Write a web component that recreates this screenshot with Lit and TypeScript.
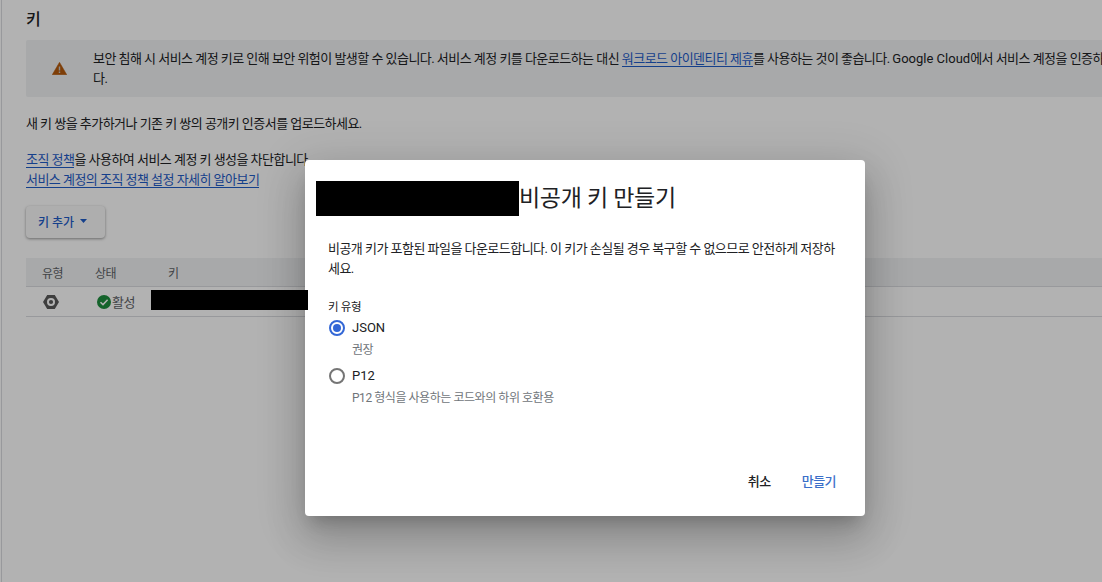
import { LitElement, html, css } from "lit";
import { customElement } from "lit/decorators.js";

@customElement("app-root")
export class AppRoot extends LitElement {
  static styles = css`
    :host {
      display: block;
      position: relative;
      width: 1102px;
      height: 582px;
      overflow: hidden;
      background: #fff;
      font-family: Roboto, "Noto Sans CJK KR", sans-serif;
      font-size: 13px;
      letter-spacing: -0.53px;
      color: #202124;
    }
    .latin { letter-spacing: 0; }
    .page {
      width: 1400px;
      height: 582px;
      box-sizing: border-box;
      margin-left: 1px;
      padding: 9px 0 0 24px;
      border-left: 1px solid #dadce0;
    }
    h2 {
      margin: 0;
      font-size: 16px;
      line-height: 22px;
      font-weight: 500;
      height: 31px;
    }
    .callout {
      display: flex;
      align-items: center;
      height: 57px;
      background: #f1f3f4;
      border-radius: 2px;
      width: 1300px;
    }
    .callout .ic {
      width: 67px;
      display: flex;
      justify-content: center;
      flex: none;
    }
    .callout p {
      margin: 0;
      line-height: 20px;
      white-space: nowrap;
    }
    a {
      color: #1f5cc8;
      text-decoration: none;
      border-bottom: 1px solid #1f5cc8;
    }
    .intro {
      margin: 17px 0 0;
      line-height: 20px;
    }
    .policy {
      margin: 16px 0 0;
      line-height: 20px;
    }
    .add {
      display: inline-flex;
      align-items: center;
      gap: 6px;
      box-sizing: border-box;
      width: 79px;
      height: 32px;
      padding: 0 0 2px 12px;
      margin-top: 16px;
      border-radius: 4px;
      font-size: 12px;
      font-weight: 500;
      letter-spacing: 0;
      color: #1f5cc8;
      background: #fafafa;
      box-shadow: 0 1px 3px rgba(0, 0, 0, 0.4);
    }
    .table { margin-top: 20px; width: 1300px; }
    .tr {
      display: grid;
      grid-template-columns: 52px 73px 1fr;
      align-items: center;
    }
    .th {
      height: 28px;
      background: #f1f3f4;
      border-bottom: 1px solid #dadce0;
      color: #5f6368;
      font-size: 12px;
    }
    .th span:first-child { padding-left: 16px; }
    .th span:nth-child(2) { padding-left: 17px; }
    .th span:nth-child(3) { padding-left: 17px; }
    .td {
      height: 29px;
      border-bottom: 1px solid #dadce0;
    }
    .td > .c1 { padding-left: 17px; display: flex; }
    .td > .c2 {
      padding-left: 19px;
      display: flex;
      align-items: center;
      gap: 1px;
      color: #5f6368;
      white-space: nowrap;
    }
    .td > .c3 { align-self: start; padding-top: 3px; }
    .redact-key {
      display: block;
      width: 157px;
      height: 20px;
      background: #000;
      position: relative;
      z-index: 3;
    }
    .scrim {
      position: absolute;
      inset: 0;
      background: rgba(0, 0, 0, 0.3);
      z-index: 1;
    }
    .dialog {
      position: absolute;
      left: 305px;
      top: 160px;
      width: 560px;
      height: 356px;
      box-sizing: border-box;
      padding: 21px 11px 0 11px;
      background: #fff;
      border-radius: 4px;
      box-shadow: 0 11px 15px -7px rgba(0, 0, 0, 0.2),
        0 24px 38px 3px rgba(0, 0, 0, 0.14),
        0 9px 46px 8px rgba(0, 0, 0, 0.12);
      z-index: 2;
      display: flex;
      flex-direction: column;
    }
    .title {
      display: flex;
      align-items: center;
      font-size: 23px;
      letter-spacing: -0.3px;
      line-height: 35px;
      color: #202124;
    }
    .redact-title {
      width: 203px;
      height: 35px;
      background: #000;
      flex: none;
    }
    .inner {
      padding: 0 13px 0 12px;
      flex: 1;
      display: flex;
      flex-direction: column;
    }
    .desc {
      margin: 23px 0 0;
      line-height: 20px;
    }
    .label {
      margin-top: 20px;
      font-size: 11.5px;
      letter-spacing: -0.3px;
      line-height: 16px;
    }
    .opt {
      display: grid;
      grid-template-columns: 24px 1fr;
      align-items: center;
      margin-top: 3px;
    }
    .opt + .opt { margin-top: 8px; }
    .opt .name { line-height: 20px; letter-spacing: 0; }
    .opt .hint {
      grid-column: 2;
      margin-top: 4px;
      font-size: 12px;
      letter-spacing: -0.45px;
      line-height: 16px;
      color: #70757a;
    }
    .radio { display: block; }
    .actions {
      margin-top: auto;
      display: flex;
      justify-content: flex-end;
      gap: 31px;
      padding: 0 5px 25px 0;
      line-height: 18px;
      font-weight: 500;
    }
    .actions .primary { color: #3b6fc9; }
  `;

  render() {
    return html`
      <div class="page">
        <h2>키</h2>
        <div class="callout">
          <div class="ic">
            <svg width="15" height="13" viewBox="0 0 15 13">
              <path d="M7.5 0.3 14.8 12.8H0.2Z" fill="#b55a0c" stroke="#b55a0c" stroke-width=".5" stroke-linejoin="round"></path>
              <path d="M6.8 4.6h1.4v4H6.8zM6.8 9.6h1.4V11H6.8z" fill="#c9c9c9"></path>
            </svg>
          </div>
          <p>
            보안 침해 시 서비스 계정 키로 인해 보안 위험이 발생할 수 있습니다. 서비스 계정 키를 다운로드하는 대신
            <a>워크로드 아이덴티티 제휴</a>를 사용하는 것이 좋습니다. <span class="latin">Google Cloud</span>에서 서비스 계정을 인증하는 더 안전한 방법을 확인할 수 있습니<br />다.
          </p>
        </div>
        <p class="intro">새 키 쌍을 추가하거나 기존 키 쌍의 공개키 인증서를 업로드하세요.</p>
        <p class="policy">
          <a>조직 정책</a>을 사용하여 서비스 계정 키 생성을 차단합니다<br />
          <a>서비스 계정의 조직 정책 설정 자세히 알아보기</a>
        </p>
        <div class="add">
          키 추가
          <svg width="7" height="4" viewBox="0 0 7 4"><path d="M0 0h7L3.5 4z" fill="#1f5cc8"></path></svg>
        </div>
        <div class="table">
          <div class="tr th"><span>유형</span><span>상태</span><span>키</span></div>
          <div class="tr td">
            <span class="c1">
              <svg width="16" height="14" viewBox="0 0 16 14">
                <path fill-rule="evenodd" d="M4.2 0h7.6L16 7l-4.2 7H4.2L0 7zM8 3a4 4 0 1 0 0 8 4 4 0 0 0 0-8z" fill="#5a5a5a"></path>
                <circle cx="8" cy="7" r="2.1" fill="#5a5a5a"></circle>
              </svg>
            </span>
            <span class="c2">
              <svg width="14" height="14" viewBox="0 0 14 14">
                <circle cx="7" cy="7" r="7" fill="#1e8e3e"></circle>
                <path d="M3.5 7.2 6 9.6 10.6 4.8" fill="none" stroke="#fff" stroke-width="1.5"></path>
              </svg>
              활성
            </span>
            <span class="c3"><span class="redact-key"></span></span>
          </div>
        </div>
      </div>
      <div class="scrim"></div>
      <div class="dialog">
        <div class="title"><span class="redact-title"></span>비공개 키 만들기</div>
        <div class="inner">
          <p class="desc">비공개 키가 포함된 파일을 다운로드합니다. 이 키가 손실될 경우 복구할 수 없으므로 안전하게 저장하세요.</p>
          <div class="label">키 유형</div>
          <div class="opt">
            <svg class="radio" width="18" height="18" viewBox="0 0 18 18">
              <circle cx="9" cy="9" r="7" fill="none" stroke="#3367d6" stroke-width="2"></circle>
              <circle cx="9" cy="9" r="4" fill="#3367d6"></circle>
            </svg>
            <span class="name">JSON</span>
            <span class="hint">권장</span>
          </div>
          <div class="opt">
            <svg class="radio" width="18" height="18" viewBox="0 0 18 18">
              <circle cx="9" cy="9" r="7" fill="none" stroke="#757575" stroke-width="2"></circle>
            </svg>
            <span class="name">P12</span>
            <span class="hint">P12 형식을 사용하는 코드와의 하위 호환용</span>
          </div>
          <div class="actions"><span>취소</span><span class="primary">만들기</span></div>
        </div>
      </div>
    `;
  }
}
